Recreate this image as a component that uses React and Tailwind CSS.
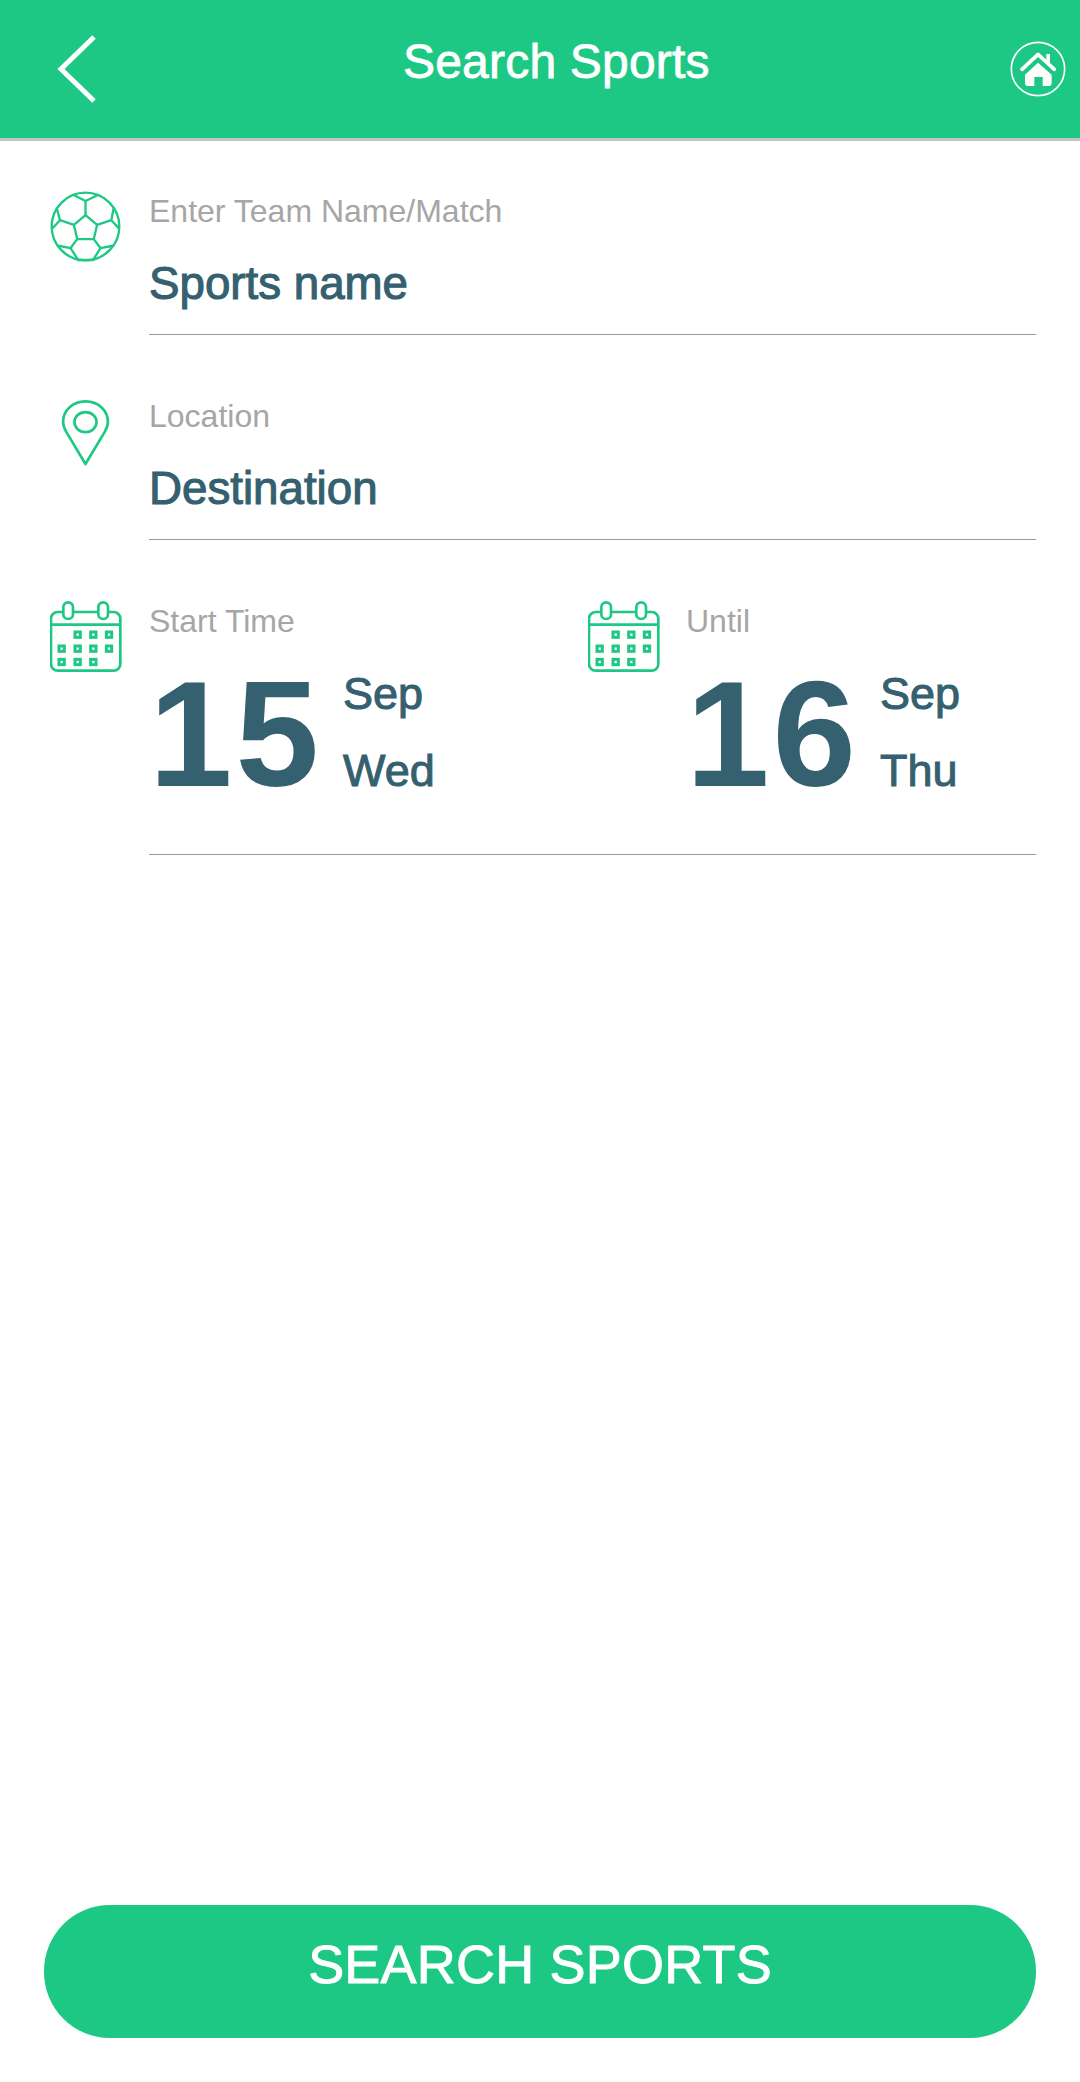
const GREEN = '#1dc884';

function BackIcon() {
  return (
    <svg width="40" height="68" viewBox="0 0 40 68" fill="none" stroke="#fff" strokeWidth="5">
      <path d="M37 2 L4 34 L37 66" />
    </svg>
  );
}

function HomeIcon() {
  return (
    <svg width="56" height="56" viewBox="328 121 168 168">
      <circle cx="412" cy="205" r="80" fill="none" stroke="#fff" strokeWidth="5" />
      <path d="M364 206 L412 161 L461 206" fill="none" stroke="#fff" strokeWidth="11" strokeLinecap="round" strokeLinejoin="round" />
      <rect x="437" y="160" width="11" height="28" fill="#fff" />
      <path d="M373 222 L412 186 L453 222 V246 Q453 256 443 256 H383 Q373 256 373 246 Z" fill="#fff" />
      <rect x="401" y="229" width="25" height="27" fill={GREEN} />
    </svg>
  );
}

function BallIcon() {
  return (
    <svg width="71" height="71" viewBox="60 60 214 214" fill="none" stroke={GREEN} strokeWidth="7" strokeLinejoin="round">
      <circle cx="167" cy="167" r="102" />
      <path d="M167 133 L202 162 L192 205 H142 L132 162 Z" />
      <path d="M167 133 V90 M133 73 L167 90 L203 73" />
      <path d="M132 162 L90 148 L80 110 M90 148 L68 172" />
      <path d="M202 162 L245 148 L252 110 M245 148 L267 172" />
      <path d="M142 205 L122 232 L85 225 M122 232 L145 268 H190 L212 232 L250 225 M192 205 L212 232" />
    </svg>
  );
}

function PinIcon() {
  return (
    <svg width="51" height="67" viewBox="92 53 150 200" fill="none" stroke={GREEN} strokeWidth="8" strokeLinejoin="round">
      <path d="M167 247 L110 152 C104 142 100 132 100 122 C100 86 130 60 167 60 C204 60 234 86 234 122 C234 132 230 142 224 152 Z" />
      <ellipse cx="167" cy="122" rx="33" ry="30" />
    </svg>
  );
}

function CalendarIcon() {
  const cells = [
    [143, 133], [190, 133], [237, 133],
    [95, 175], [143, 175], [190, 175], [237, 175],
    [95, 215], [143, 215], [190, 215],
  ];
  return (
    <svg width="72" height="72" viewBox="60 32 216 216" fill="none" stroke={GREEN} strokeWidth="8">
      <rect x="63" y="65" width="208" height="176" rx="20" />
      <path d="M63 103 H271" />
      <rect x="100" y="36" width="29" height="50" rx="14.5" fill="#fff" />
      <rect x="205" y="36" width="29" height="50" rx="14.5" fill="#fff" />
      {cells.map(([x, y]) => (
        <rect key={`${x}-${y}`} x={x - 8} y={y - 8} width="16" height="16" strokeWidth="9" />
      ))}
    </svg>
  );
}

function Field({ icon, label, value, className }) {
  return (
    <div className={`flex ${className}`}>
      <div className="w-[99px] shrink-0 flex justify-center pr-[28px]">{icon}</div>
      <div className="flex-1 h-[143px] border-b border-[#9a9a9a]">
        <div className="text-[32px] leading-[38px] text-[#a6a6a6]">{label}</div>
        <div className="mt-[27px] text-[45.7px] leading-[54px] text-[#35606f] [-webkit-text-stroke:1.1px_#35606f]">{value}</div>
      </div>
    </div>
  );
}

function DateBlock({ label, day, month, weekday }) {
  return (
    <div>
      <div className="text-[32px] leading-[38px] text-[#a6a6a6]">{label}</div>
      <div className="flex mt-[29px]">
        <div className="w-[194px] text-[150px] leading-[130px] tracking-[3px] font-bold text-[#35606f]">{day}</div>
        <div className="-mt-[14px] text-[45px] leading-[77px] text-[#35606f] [-webkit-text-stroke:1px_#35606f]">
          <div>{month}</div>
          <div>{weekday}</div>
        </div>
      </div>
    </div>
  );
}

export default function App() {
  return (
    <div className="w-[1080px] h-[2082px] bg-white flex flex-col font-['Liberation_Sans',Arial,sans-serif]">
      <header className="h-[141px] shrink-0 bg-[#1dc884] border-b-[3px] border-[#c2c2c2] flex items-center text-white">
        <div className="ml-[57px] w-[40px]"><BackIcon /></div>
        <h1 className="ml-[306px] mb-[14px] text-[48px] leading-none tracking-[0.2px] [-webkit-text-stroke:0.8px_#fff]">Search Sports</h1>
        <div className="ml-auto mr-[14px]"><HomeIcon /></div>
      </header>

      <main className="flex-1 pl-[50px] pr-[44px] pt-[51px]">
        <Field icon={<div className="-mt-[1px]"><BallIcon /></div>} label="Enter Team Name/Match" value="Sports name" />
        <Field icon={<div className="pt-[2px]"><PinIcon /></div>} label="Location" value="Destination" className="mt-[62px]" />

        <div className="flex mt-[62px]">
          <div className="w-[99px] shrink-0 -mt-[1px]"><CalendarIcon /></div>
          <div className="flex-1 h-[253px] border-b border-[#9a9a9a] flex">
            <div className="w-[439px]">
              <DateBlock label="Start Time" day="15" month="Sep" weekday="Wed" />
            </div>
            <div className="w-[98px] shrink-0 -mt-[1px]"><CalendarIcon /></div>
            <DateBlock label="Until" day="16" month="Sep" weekday="Thu" />
          </div>
        </div>
      </main>

      <div className="px-[44px] pb-[44px]">
        <button className="w-full h-[133px] pb-[14px] rounded-[66px] bg-[#1dc884] text-white text-[54px] tracking-[0.2px] [-webkit-text-stroke:0.9px_#fff]">
          SEARCH SPORTS
        </button>
      </div>
    </div>
  );
}
